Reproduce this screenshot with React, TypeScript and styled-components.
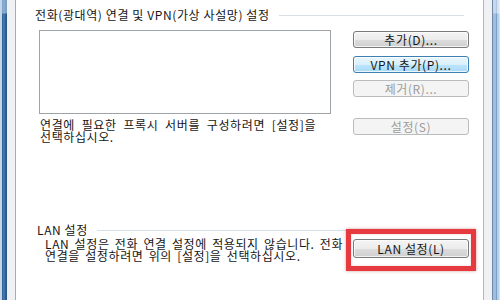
import React from 'react';
import styled, { createGlobalStyle } from 'styled-components';

const Global = createGlobalStyle`
  html, body { margin: 0; padding: 0; width: 500px; height: 300px; overflow: hidden; background: #fff; }
  #root { width: 500px; height: 300px; }
`;

const Window = styled.div`
  display: flex;
  width: 500px;
  height: 300px;
  font-family: "Noto Sans CJK KR", "Noto Sans", sans-serif;
  font-size: 12px;
  letter-spacing: 0.6px;
  color: #161616;
`;

const AeroEdge = styled.div<{ $side: 'left' | 'right' }>`
  flex: none;
  width: 7px;
  height: 100%;
  background: ${(p) =>
    p.$side === 'left'
      ? `linear-gradient(to bottom, rgba(190,215,240,0.55) 0 13px, transparent 14px),
         linear-gradient(to right, #c6d6e6 0 2px, #2c5c8d 2px, #4d84b8 4px, #2f6194 5px, #2a5886 7px)`
      : `linear-gradient(to bottom, rgba(255,255,255,0.4) 0 13px, transparent 14px),
         linear-gradient(to right, #9fbedf 0 3px, #7d9ec3 3px 4px, #b7d0ea 4px 6px, #d2e2f2 6px)`};
`;

const FramePad = styled.div<{ $side: 'left' | 'right' }>`
  flex: none;
  width: 8px;
  height: 100%;
  background: #eff1f4;
  ${(p) =>
    p.$side === 'left'
      ? 'border-right: 1px solid #a9acb0;'
      : 'border-left: 1px solid #b4b7bb; border-right: 1px solid #6f89a6;'}
`;

const Content = styled.div`
  flex: 1;
  background: #fff;
  padding: 8px 14px 0 19px;
  display: flex;
  flex-direction: column;
`;

const GroupHeader = styled.div<{ $offset?: number }>`
  display: flex;
  align-items: center;
  height: 14px;
  margin-right: 5px;
  padding-left: ${(p) => p.$offset ?? 0}px;
`;

const GroupTitle = styled.span`
  white-space: nowrap;
  line-height: 14px;
`;

const GroupRule = styled.div`
  flex: 1;
  height: 1px;
  margin-left: 9px;
  background: #d5dfe5;
`;

const GroupBody = styled.div`
  display: flex;
  justify-content: space-between;
  margin-top: 8px;
  padding-left: 4px;
`;

const LeftColumn = styled.div`
  display: flex;
  flex-direction: column;
  width: 292px;
`;

const ListBox = styled.div`
  box-sizing: border-box;
  width: 292px;
  height: 84px;
  border: 1px solid #9ea3a8;
  background: #fff;
`;

const HelpText = styled.p<{ $indent?: number; $top?: number; $words?: number }>`
  margin: ${(p) => p.$top ?? 5}px 0 0 ${(p) => p.$indent ?? 1}px;
  line-height: 12px;
  white-space: nowrap;
  word-spacing: ${(p) => p.$words ?? 0}px;
`;

const ButtonColumn = styled.div`
  display: flex;
  flex-direction: column;
  width: 116px;
  padding-top: 1px;
`;

type Variant = 'normal' | 'hover' | 'disabled';

const WinButton = styled.div<{ $variant?: Variant; $gap?: number; $height?: number }>`
  box-sizing: border-box;
  width: 116px;
  height: ${(p) => p.$height ?? 17}px;
  margin-top: ${(p) => p.$gap ?? 0}px;
  border-radius: 3px;
  display: flex;
  align-items: center;
  justify-content: center;
  line-height: 14px;
  white-space: nowrap;
  border: 1px solid
    ${(p) => (p.$variant === 'hover' ? '#3c7fb1' : p.$variant === 'disabled' ? '#b9bdc0' : '#7a7a7a')};
  color: ${(p) => (p.$variant === 'disabled' ? '#9c9c9c' : '#161616')};
  background: ${(p) =>
    p.$variant === 'hover'
      ? 'linear-gradient(to bottom, #eaf6fd 0%, #d9f0fc 50%, #bee6fd 51%, #a7d9f5 100%)'
      : p.$variant === 'disabled'
      ? '#f4f4f4'
      : 'linear-gradient(to bottom, #f4f4f4 0%, #ececec 50%, #dddddd 51%, #cfcfcf 100%)'};
  box-shadow: ${(p) => (p.$variant === 'disabled' ? 'none' : 'inset 0 0 0 1px rgba(255,255,255,0.75)')};
`;

const LanSection = styled.div`
  display: flex;
  flex-direction: column;
  margin-top: 80px;
`;

const LanBody = styled.div`
  display: flex;
  justify-content: space-between;
  align-items: flex-start;
  margin-top: 2px;
  padding-left: 4px;
`;

const Highlighted = styled.div`
  position: relative;
`;

const RedFrame = styled.div`
  position: absolute;
  left: -7px;
  right: -7px;
  top: -10px;
  bottom: -13px;
  border: 5px solid #e43a40;
  box-shadow: 0 0 3px rgba(170, 40, 40, 0.45), inset 0 0 2px rgba(170, 40, 40, 0.3);
  pointer-events: none;
`;

export default function App() {
  return (
    <>
      <Global />
      <Window>
        <AeroEdge $side="left" />
        <FramePad $side="left" />
        <Content>
          <GroupHeader>
            <GroupTitle>전화(광대역) 연결 및 VPN(가상 사설망) 설정</GroupTitle>
            <GroupRule />
          </GroupHeader>
          <GroupBody>
            <LeftColumn>
              <ListBox />
              <HelpText $top={5} $words={3.5}>
                연결에 필요한 프록시 서버를 구성하려면 [설정]을
                <br />
                선택하십시오.
              </HelpText>
            </LeftColumn>
            <ButtonColumn>
              <WinButton>추가(D)...</WinButton>
              <WinButton $variant="hover" $gap={8}>VPN 추가(P)...</WinButton>
              <WinButton $variant="disabled" $gap={7}>제거(R)...</WinButton>
              <WinButton $variant="disabled" $gap={21}>설정(S)</WinButton>
            </ButtonColumn>
          </GroupBody>
          <LanSection>
            <GroupHeader $offset={2}>
              <GroupTitle>LAN 설정</GroupTitle>
              <GroupRule />
            </GroupHeader>
            <LanBody>
              <HelpText $indent={6} $top={-1} $words={2}>
                LAN 설정은 전화 연결 설정에 적용되지 않습니다. 전화
                <br />
                연결을 설정하려면 위의 [설정]을 선택하십시오.
              </HelpText>
              <Highlighted>
                <WinButton $height={19}>LAN 설정(L)</WinButton>
                <RedFrame />
              </Highlighted>
            </LanBody>
          </LanSection>
        </Content>
        <FramePad $side="right" />
        <AeroEdge $side="right" />
      </Window>
    </>
  );
}
